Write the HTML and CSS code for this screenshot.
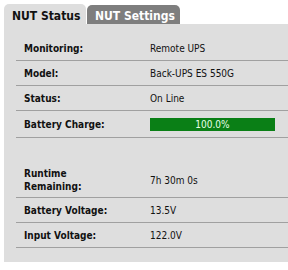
FILE: index.html
```html
<!DOCTYPE html>
<html>
<head>
<meta charset="utf-8">
<link rel="stylesheet" href="styles.css">
</head>
<body>
<div class="tabs">
  <div class="tab active">NUT Status</div>
  <div class="tab">NUT Settings</div>
</div>
<div class="panel">
  <div class="rows">
    <div class="row"><div class="label">Monitoring:</div><div class="value">Remote UPS</div></div>
    <div class="row"><div class="label">Model:</div><div class="value">Back-UPS ES 550G</div></div>
    <div class="row"><div class="label">Status:</div><div class="value">On Line</div></div>
    <div class="row bar-row"><div class="label">Battery Charge:</div><div class="value"><div class="bar">100.0%</div></div></div>
    <div class="spacer"></div>
    <div class="row tall"><div class="label">Runtime<br>Remaining:</div><div class="value">7h 30m 0s</div></div>
    <div class="row"><div class="label">Battery Voltage:</div><div class="value">13.5V</div></div>
    <div class="row"><div class="label">Input Voltage:</div><div class="value">122.0V</div></div>
  </div>
</div>
</body>
</html>
```
FILE: styles.css
```css
html, body { margin: 0; padding: 0; background: #fff; }
body { font-family: "DejaVu Sans Condensed", "DejaVu Sans", sans-serif; color: #111; width: 288px; overflow: hidden; }
.tabs { display: flex; align-items: flex-end; gap: 1px; padding: 4px 0 0 4px; height: 20px; }
.tab { font-weight: bold; font-size: 12px; border-radius: 5px 5px 0 0; box-sizing: border-box; }
.tab.active { background: #dedede; width: 82px; height: 20px; padding: 5px 0 0 8px; color: #111; }
.tab:not(.active) { background: #7e7e7e; color: #fff; width: 93px; height: 19px; padding: 4px 0 0 8px; }
.panel { margin-left: 4px; background: #dedede; padding: 12px 0 14px 12px; }
.rows { display: flex; flex-direction: column; }
.row { display: flex; align-items: center; height: 24px; border-bottom: 1px solid #a0a0a0; font-size: 10px; }
.row.bar-row { height: 26px; }
.row.tall { height: 34px; }
.spacer { height: 25px; }
.label { width: 134px; padding-left: 8px; box-sizing: border-box; font-weight: bold; line-height: 13px; }
.value { flex: 1; }
.bar { width: 125px; height: 13px; background: #0a7f16; color: #e8ffe8; text-align: center; font-size: 10px; line-height: 13px; }
```
